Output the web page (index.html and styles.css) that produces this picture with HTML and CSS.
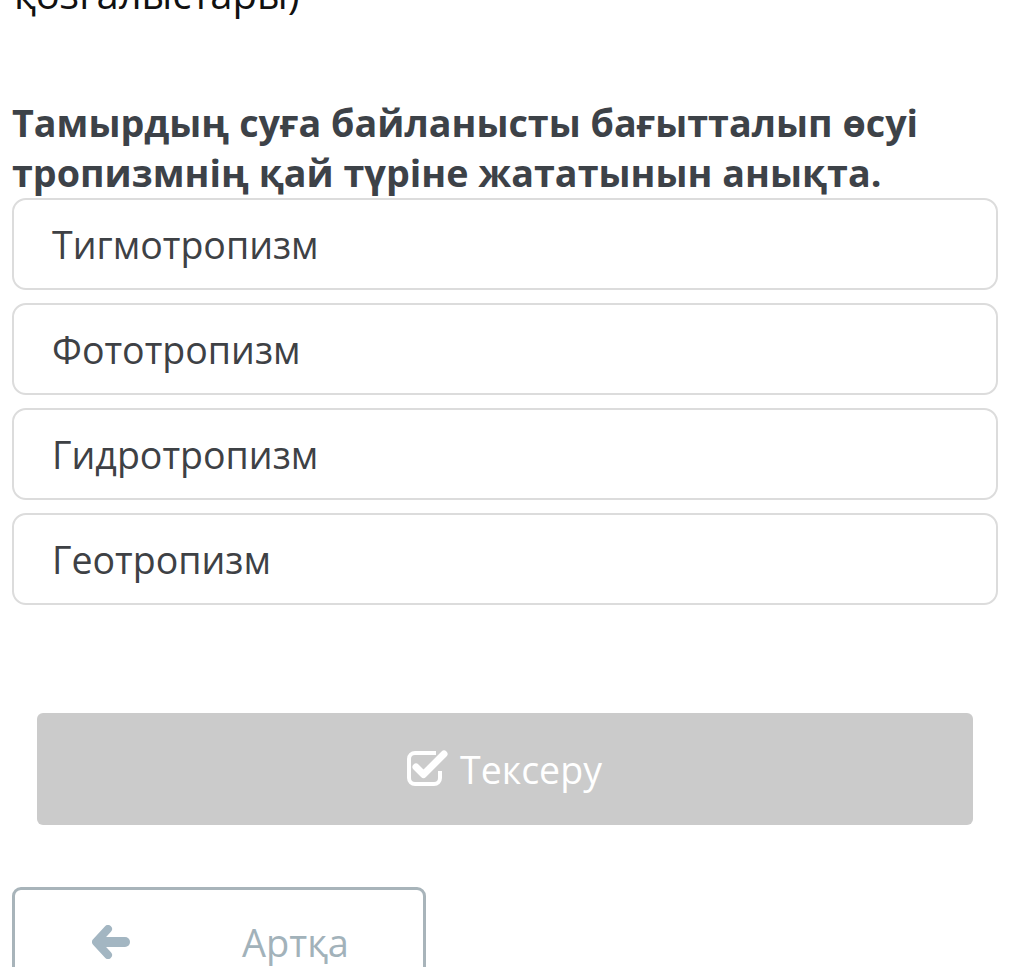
FILE: index.html
```html
<!DOCTYPE html>
<html lang="kk">
<head>
<meta charset="utf-8">
<link rel="stylesheet" href="styles.css">
</head>
<body>
<div class="page">
  <div class="prev">қозғалыстары)</div>
  <h2 class="question">Тамырдың суға байланысты бағытталып өсуі тропизмнің қай түріне жататынын анықта.</h2>
  <div class="options">
    <div class="option">Тигмотропизм</div>
    <div class="option">Фототропизм</div>
    <div class="option">Гидротропизм</div>
    <div class="option">Геотропизм</div>
  </div>
  <div class="check-wrap">
    <button class="check">
      <svg class="check-icon" viewBox="0 0 42 40" width="42" height="40">
        <path d="M30 6 H9 A6 6 0 0 0 3 12 V31 A6 6 0 0 0 9 37 H28 A6 6 0 0 0 34 31 V24" fill="none" stroke="#fff" stroke-width="4"/>
        <path d="M10 20 L17.5 27.5 L38 7" fill="none" stroke="#fff" stroke-width="7" stroke-linecap="round" stroke-linejoin="round"/>
      </svg>
      <span>Тексеру</span>
    </button>
  </div>
  <div class="nav">
    <button class="back">
      <svg class="arrow" viewBox="0 0 38 34" width="38" height="34">
        <path d="M16 4 L4 17 L16 30" fill="none" stroke="#a3b6c2" stroke-width="8" stroke-linecap="round" stroke-linejoin="round"/>
        <path d="M7 17 L33 17" fill="none" stroke="#a3b6c2" stroke-width="10" stroke-linecap="round"/>
      </svg>
      <span>Артқа</span>
    </button>
  </div>
</div>
</body>
</html>
```
FILE: styles.css
```css
html, body {
  margin: 0;
  padding: 0;
  background: #fff;
}
.page {
  font-family: "Open Sans", "Noto Sans", sans-serif;
  overflow: hidden;
  height: 967px;
}
.prev {
  font-size: 40px;
  line-height: 50px;
  color: #111;
  margin-top: -31px;
  padding-left: 14px;
}
.question {
  margin: 79px 0 0 0;
  padding: 0 12px;
  font-size: 37.7px;
  font-weight: 700;
  line-height: 50px;
  color: #3d4248;
}
.options {
  margin: 0 17px 0 12px;
  display: flex;
  flex-direction: column;
  gap: 13px;
}
.option {
  height: 88px;
  border: 2px solid #dcdcdc;
  border-radius: 14px;
  box-sizing: content-box;
  display: flex;
  align-items: center;
  padding-left: 38px;
  font-size: 37.5px;
  color: #3e4145;
}
.check-wrap {
  margin: 108px 42px 0 37px;
}
.check {
  width: 100%;
  height: 112px;
  border: none;
  border-radius: 6px;
  background: #cbcbcb;
  color: #fff;
  font-family: inherit;
  font-size: 37.5px;
  display: flex;
  align-items: center;
  justify-content: center;
  gap: 12px;
  padding: 0 2px 0 0;
}
.check-icon {
  display: block;
  margin-top: -4px;
}
.nav {
  margin: 62px 0 0 12px;
}
.back {
  width: 414px;
  height: 110px;
  border: 3px solid #a8b4ba;
  border-radius: 9px;
  background: #fff;
  font-family: inherit;
  font-size: 38px;
  color: #a2b2ba;
  display: flex;
  align-items: center;
  padding: 0 0 0 77px;
  box-sizing: border-box;
}
.back .arrow {
  display: block;
  margin-right: 113px;
}
.back span {
  margin-left: -1px;
}
```
